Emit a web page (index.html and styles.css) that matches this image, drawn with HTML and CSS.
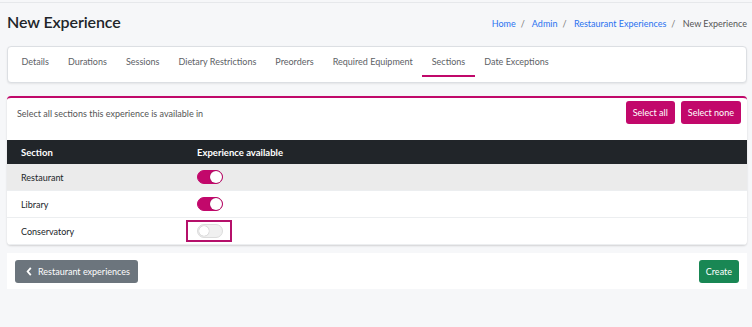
FILE: index.html
```html
<!DOCTYPE html>
<html lang="en">
<head>
    <meta charset="UTF-8">
    <meta name="viewport" content="width=device-width, initial-scale=1.0">
    <title>New Experience</title>
    <link rel="stylesheet" href="styles.css">
</head>
<body>
    <div class="page">
        <div class="page-header">
            <h1>New Experience</h1>
            <nav class="breadcrumb">
                <a href="#">Home</a><span class="sep">/</span>
                <a href="#">Admin</a><span class="sep">/</span>
                <a href="#">Restaurant Experiences</a><span class="sep">/</span>
                <span class="current">New Experience</span>
            </nav>
        </div>

        <div class="tabs-card">
            <a class="tab" href="#">Details</a>
            <a class="tab" href="#">Durations</a>
            <a class="tab" href="#">Sessions</a>
            <a class="tab" href="#">Dietary Restrictions</a>
            <a class="tab" href="#">Preorders</a>
            <a class="tab" href="#">Required Equipment</a>
            <a class="tab active" href="#">Sections</a>
            <a class="tab" href="#">Date Exceptions</a>
        </div>

        <div class="card">
            <div class="card-header">
                <span class="hint">Select all sections this experience is available in</span>
                <div class="actions">
                    <button class="btn btn-pink">Select all</button>
                    <button class="btn btn-pink">Select none</button>
                </div>
            </div>
            <table class="sections-table">
                <thead>
                    <tr>
                        <th class="col-name">Section</th>
                        <th>Experience available</th>
                    </tr>
                </thead>
                <tbody>
                    <tr class="striped">
                        <td>Restaurant</td>
                        <td><span class="switch on"></span></td>
                    </tr>
                    <tr>
                        <td>Library</td>
                        <td><span class="switch on"></span></td>
                    </tr>
                    <tr>
                        <td>Conservatory</td>
                        <td><span class="focus-box"><span class="switch"></span></span></td>
                    </tr>
                </tbody>
            </table>
        </div>

        <div class="footer-card">
            <button class="btn btn-grey">
                <svg width="6" height="9" viewBox="0 0 6 10"><path d="M5 1 L1.5 5 L5 9" fill="none" stroke="#fff" stroke-width="2"/></svg>
                Restaurant experiences
            </button>
            <button class="btn btn-green">Create</button>
        </div>
    </div>
</body>
</html>
```

FILE: styles.css
```css
body {
    margin: 0;
    padding: 0;
    background-color: #f6f7f9;
    font-family: "Lato", "Liberation Sans", sans-serif;
    color: #212529;
}

.page {
    border-top: 1px solid #e6e8eb;
    margin-top: 2px;
    padding: 0 5px 0 7px;
}

.page-header {
    display: flex;
    justify-content: space-between;
    align-items: center;
    height: 40px;
}

.page-header h1 {
    margin: 0;
    font-size: 16px;
    font-weight: 600;
    letter-spacing: -0.1px;
    color: #212529;
    position: relative;
    top: -2px;
}

.breadcrumb {
    font-size: 9px;
    color: #555;
}

.breadcrumb a {
    color: #2a72f0;
    text-decoration: none;
}

.breadcrumb .sep {
    color: #777;
    margin: 0 5px;
}

.tabs-card {
    display: flex;
    align-items: stretch;
    height: 35px;
    margin-top: 3px;
    padding: 0 4px;
    background-color: #fff;
    border: 1px solid #dcdfe3;
    border-radius: 4px;
    box-shadow: 0 1px 2px rgba(0, 0, 0, 0.08);
}

.tab {
    display: flex;
    align-items: center;
    padding: 0 9.5px;
    font-size: 9px;
    color: #5d6166;
    text-decoration: none;
    border-bottom: 2px solid transparent;
    margin-bottom: 5px;
    padding-top: 1px;
}

.tab.active {
    border-bottom-color: #c0086a;
}

.card {
    margin-top: 13px;
    background-color: #fff;
    border-top: 2px solid #c0086a;
    border-radius: 4px;
    box-shadow: 0 1px 2px rgba(0, 0, 0, 0.15);
    overflow: hidden;
}

.card-header {
    display: flex;
    justify-content: space-between;
    align-items: flex-start;
    height: 42px;
    padding: 3px 6px 0 10px;
    box-sizing: border-box;
}

.hint {
    font-size: 9px;
    color: #555;
    margin-top: 7px;
}

.actions {
    display: flex;
    gap: 6px;
}

.btn {
    border: none;
    border-radius: 3px;
    color: #fff;
    font-family: inherit;
    font-size: 9px;
    height: 23px;
    padding: 0 7px;
    cursor: pointer;
}

.btn-pink {
    background-color: #c2086b;
}

.btn-grey {
    background-color: #6c757d;
    display: flex;
    align-items: center;
    gap: 6px;
    padding: 0 8px 0 11px;
}

.btn-green {
    background-color: #198754;
}

.sections-table {
    width: 100%;
    border-collapse: collapse;
    font-size: 9px;
}

.sections-table th {
    background-color: #212529;
    color: #fff;
    text-align: left;
    font-weight: 700;
    font-size: 9.5px;
    height: 24px;
    padding: 0 14px;
}

.sections-table th.col-name {
    width: 148px;
}

.sections-table td {
    height: 26px;
    padding: 0 14px;
    border-bottom: 1px solid #eceef0;
    color: #212529;
}

.sections-table tr.striped td {
    background-color: #ebebeb;
}

.switch {
    display: inline-block;
    position: relative;
    width: 26px;
    height: 14px;
    border-radius: 7px;
    background-color: #f0f0f0;
    border: 1px solid #dcdcdc;
    box-sizing: border-box;
    vertical-align: middle;
}

.switch::after {
    content: "";
    position: absolute;
    top: 1px;
    left: 1px;
    width: 10px;
    height: 10px;
    border-radius: 50%;
    background-color: #fff;
    box-shadow: 0 0 1px rgba(0, 0, 0, 0.4);
}

.switch.on {
    background-color: #c2086b;
    border-color: #c2086b;
}

.switch.on::after {
    left: auto;
    right: 0;
    top: 0;
    width: 12px;
    height: 12px;
}

.focus-box {
    display: inline-flex;
    align-items: center;
    border: 2px solid #b5106a;
    padding: 2px 7px 2px 9px;
    margin-left: -11px;
}

.footer-card {
    display: flex;
    justify-content: space-between;
    align-items: center;
    margin-top: 8px;
    height: 36px;
    padding: 0 8px;
    background-color: #fff;
}
```
